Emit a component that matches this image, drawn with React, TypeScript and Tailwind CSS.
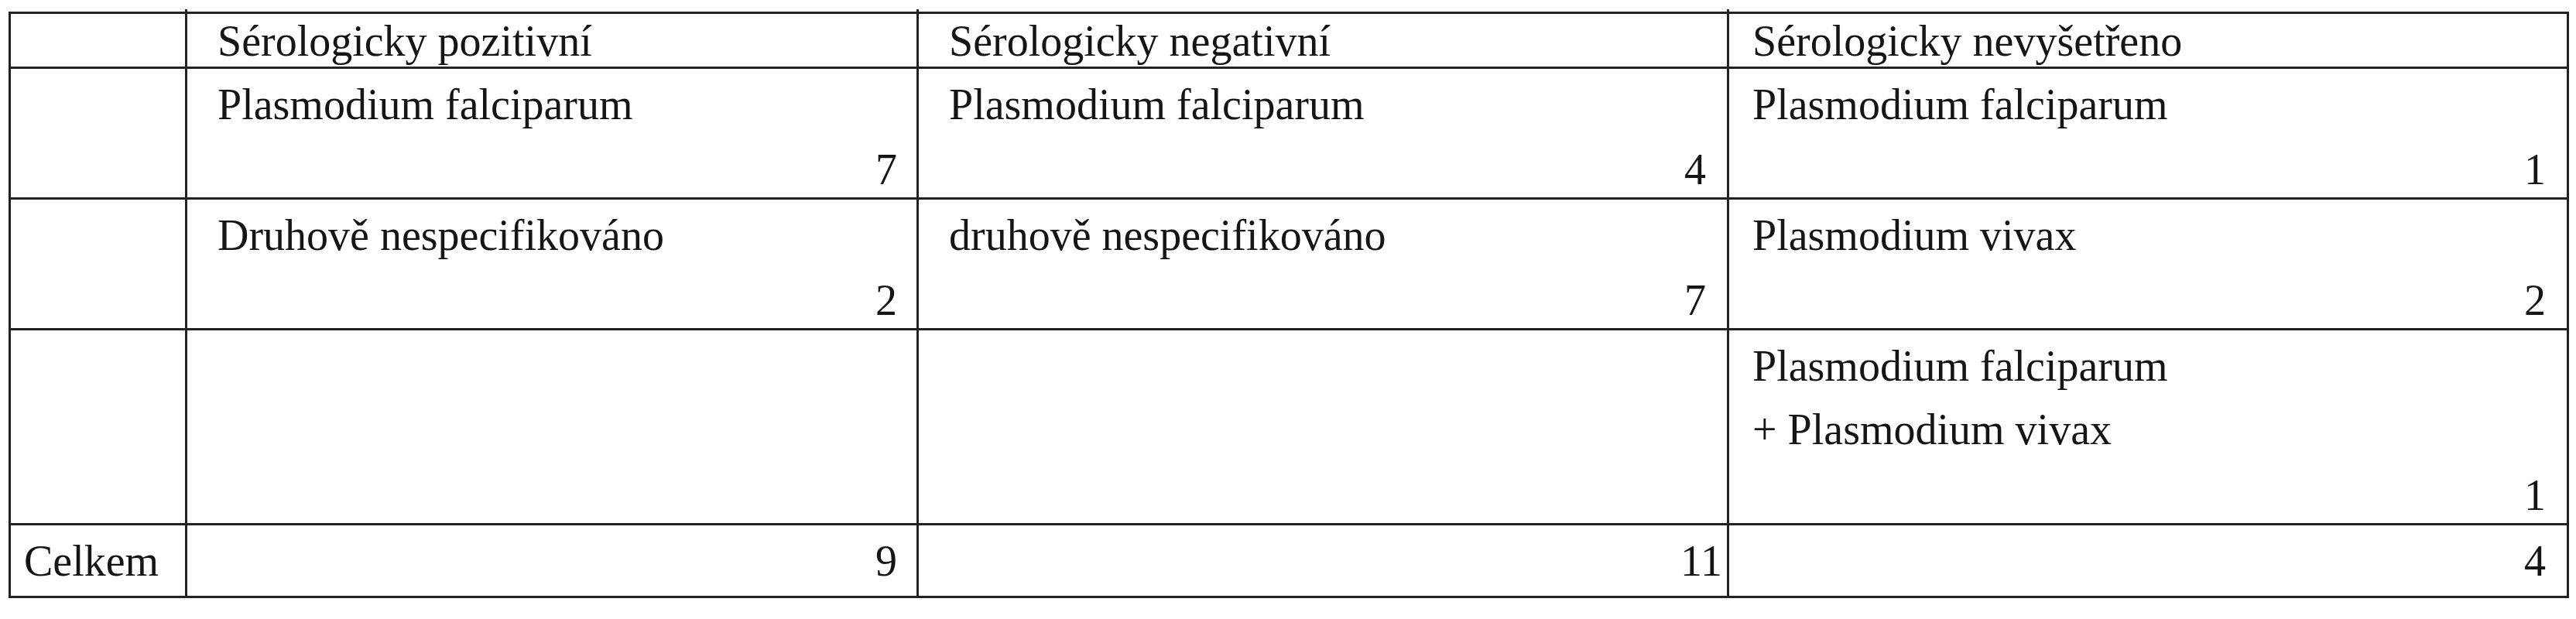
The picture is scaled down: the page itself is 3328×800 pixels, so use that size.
const cell = "border-r-[3px] border-b-[3px] border-[#222]";

type Row = {
  height: string;
  cells: { lines: string[]; value?: string }[];
};

const padLeft = ["pl-[39px]", "pl-[39px]", "pl-[30px]"];
const padRight = ["pr-[25px]", "pr-[27px]", "pr-[27px]"];

const rows: Row[] = [
  {
    height: "h-[169px]",
    cells: [
      { lines: ["Plasmodium falciparum"], value: "7" },
      { lines: ["Plasmodium falciparum"], value: "4" },
      { lines: ["Plasmodium falciparum"], value: "1" },
    ],
  },
  {
    height: "h-[169px]",
    cells: [
      { lines: ["Druhově nespecifikováno"], value: "2" },
      { lines: ["druhově nespecifikováno"], value: "7" },
      { lines: ["Plasmodium vivax"], value: "2" },
    ],
  },
  {
    height: "h-[252px]",
    cells: [
      { lines: [] },
      { lines: [] },
      { lines: ["Plasmodium falciparum", "+ Plasmodium vivax"], value: "1" },
    ],
  },
];

const totals = [
  { value: "9", pad: "pr-[25px]" },
  { value: "11", pad: "pr-[6px]" },
  { value: "4", pad: "pr-[27px]" },
];

const headers = ["Sérologicky pozitivní", "Sérologicky negativní", "Sérologicky nevyšetřeno"];

export default function App() {
  return (
    <div className="min-h-[800px] w-[3328px] bg-white pl-[11px] pt-[12px] font-['Liberation_Serif','Times_New_Roman',serif] text-[56px] text-[#151515]">
      {/* column rules poke slightly above the top border */}
      <div className="grid h-[3px] w-[3308px] grid-cols-[231px_945px_1047px]">
        <div className="border-r-[3px] border-[#222]" />
        <div className="border-r-[3px] border-[#222]" />
        <div className="border-r-[3px] border-[#222]" />
      </div>

      <div className="grid w-[3308px] grid-cols-[228px_945px_1047px_1085px] border-l-[3px] border-t-[3px] border-[#222]">
        {/* Header */}
        <div className={`${cell} h-[71px]`} />
        {headers.map((h, i) => (
          <div key={h} className={`${cell} h-[71px] pt-[3px] leading-[64px] whitespace-nowrap ${padLeft[i]}`}>
            {h}
          </div>
        ))}

        {/* Data rows */}
        {rows.map((row, r) => (
          <div key={r} className="contents">
            <div className={`${cell} ${row.height}`} />
            {row.cells.map((c, i) => (
              <div
                key={i}
                className={`${cell} ${row.height} flex flex-col justify-between pt-[5px] pb-[4px] whitespace-nowrap`}
              >
                <div className={padLeft[i]}>
                  {c.lines.map((line) => (
                    <div key={line} className="leading-[82px]">
                      {line}
                    </div>
                  ))}
                </div>
                {c.value && (
                  <div className={`text-right leading-[64px] ${padRight[i]}`}>{c.value}</div>
                )}
              </div>
            ))}
          </div>
        ))}

        {/* Totals */}
        <div className={`${cell} h-[94px] pl-[17px] pt-[14px] leading-[64px]`}>Celkem</div>
        {totals.map((t) => (
          <div key={t.value} className={`${cell} h-[94px] pt-[14px] text-right leading-[64px] ${t.pad}`}>
            {t.value}
          </div>
        ))}
      </div>
    </div>
  );
}
